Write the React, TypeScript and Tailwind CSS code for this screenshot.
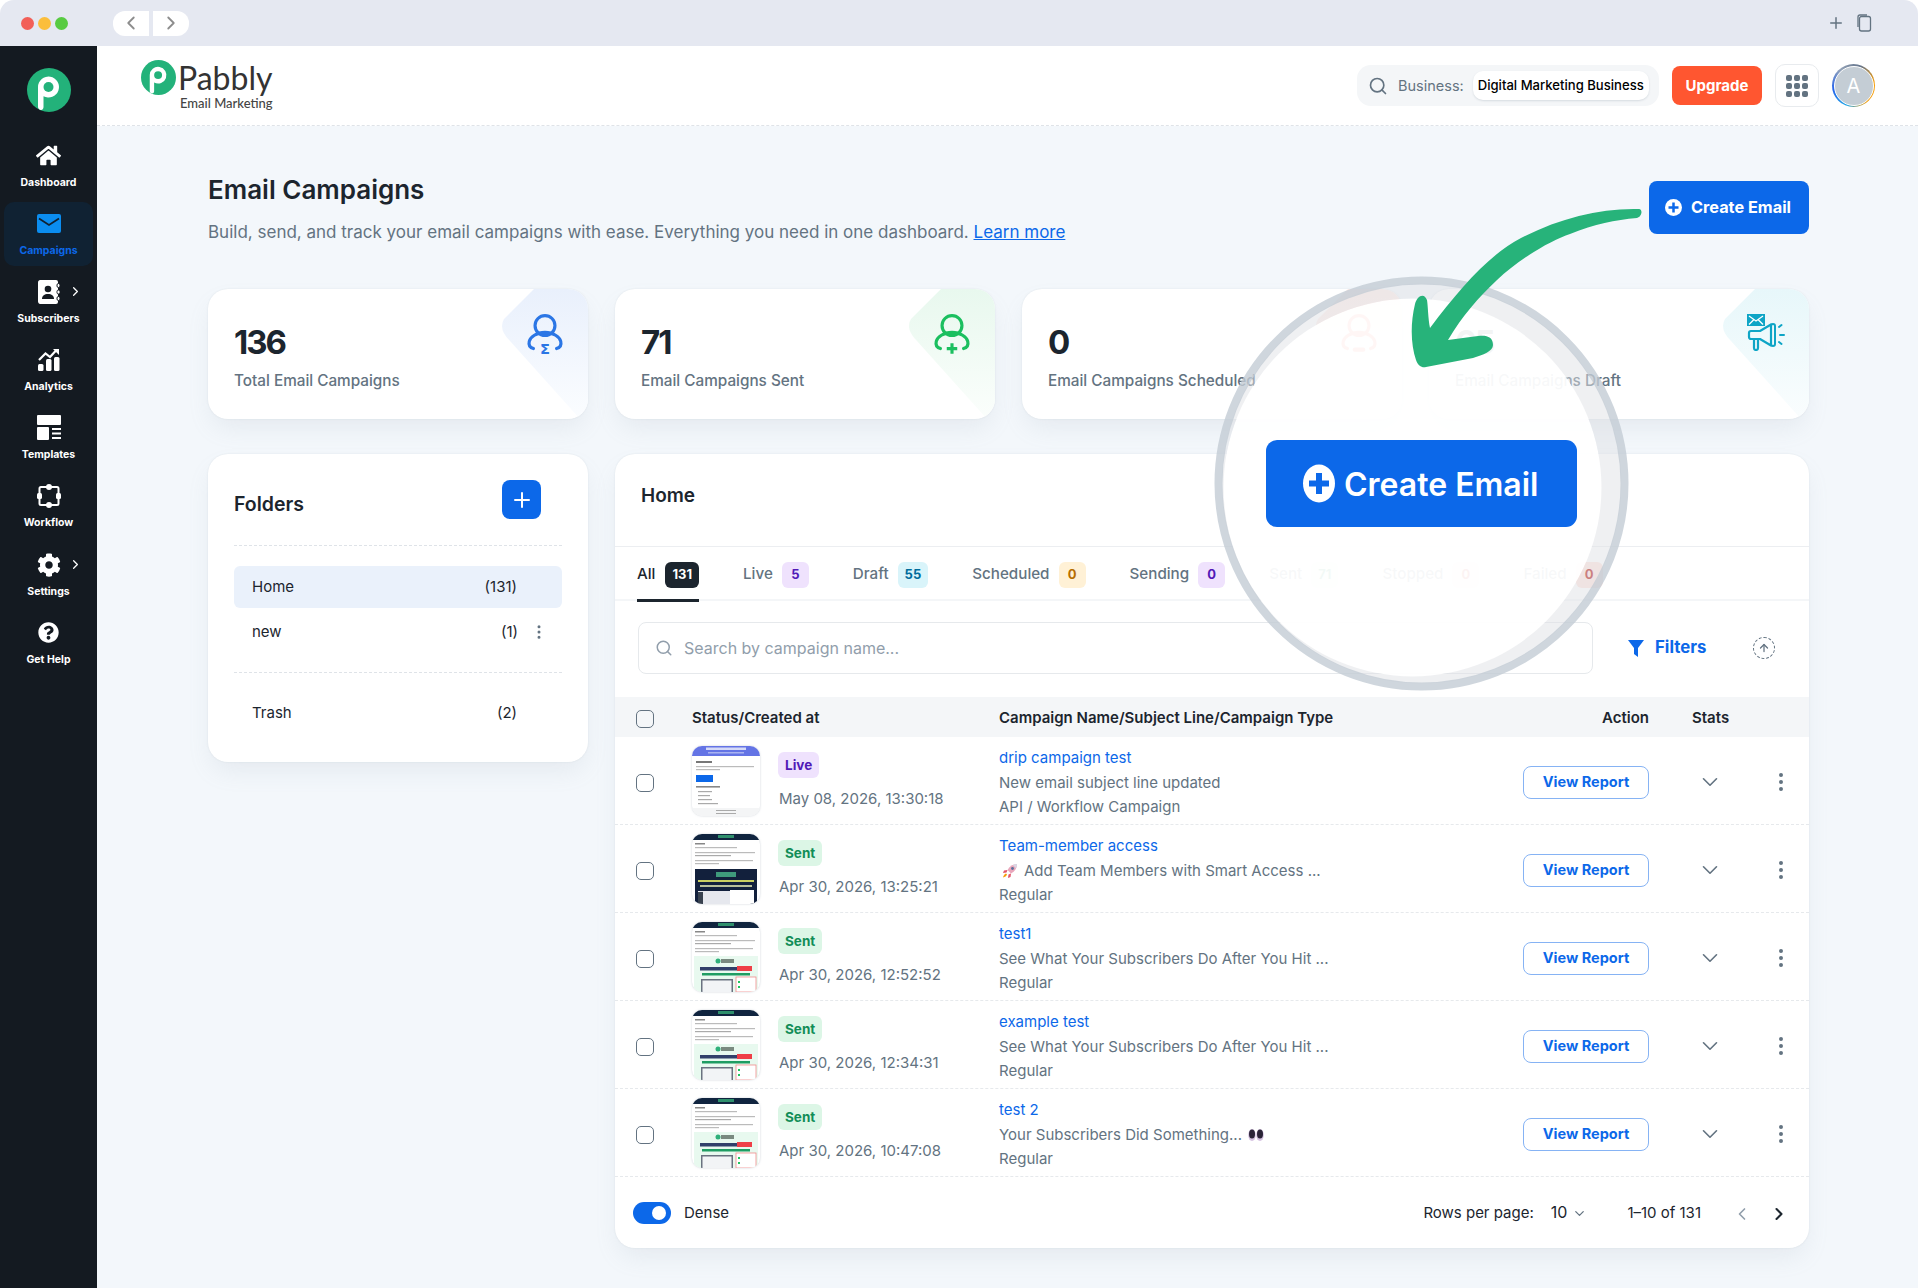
import React from 'react';
import { ChevronDown, ChevronLeft, ChevronRight, EllipsisVertical, Plus, Search, ArrowUp } from 'lucide-react';
import { FaHome, FaCog, FaQuestionCircle } from 'react-icons/fa';

const LogoMark = ({ size }: { size: number }) => (
  <svg width={size} height={size} viewBox="0 0 44 44">
    <circle cx="22" cy="22" r="22" fill="#23b27a" />
    <path d="M11 19a10.5 10.5 0 1 1 5.5 9.3V39c0 1.5-.8 3-2.5 3-1.6 0-3-1.5-3-3z" fill="#fff" />
    <circle cx="21.5" cy="19" r="5" fill="#23b27a" />
  </svg>
);

const MailIcon = () => (
  <svg width="24" height="19" viewBox="0 0 24 19">
    <rect width="24" height="19" rx="2" fill="#0b8df0" />
    <path d="M2 4.5 12 11l10-6.500" fill="none" stroke="#102233" strokeWidth="1.8" />
  </svg>
);

const ContactsIcon = () => (
  <svg width="22" height="24" viewBox="0 0 22 24">
    <path d="M3 0h15a2 2 0 0 1 2 2v20a2 2 0 0 1-2 2H3a2.5 2.5 0 0 1-3-2.5V2.5A2.5 2.5 0 0 1 3 0z" fill="#fff" />
    <rect x="19" y="3.5" width="3" height="4" rx="1.5" fill="#fff" stroke="#141a21" />
    <rect x="19" y="10" width="3" height="4" rx="1.5" fill="#fff" stroke="#141a21" />
    <rect x="19" y="16.5" width="3" height="4" rx="1.5" fill="#fff" stroke="#141a21" />
    <circle cx="10" cy="9" r="3.3" fill="#141a21" />
    <path d="M4 19c0-3.500 2.500-5 6-5s6 1.500 6 5z" fill="#141a21" />
  </svg>
);

const AnalyticsIcon = () => (
  <svg width="22" height="23" viewBox="0 0 22 23">
    <rect x="0" y="16" width="5.5" height="7" rx="1.5" fill="#fff" />
    <rect x="8" y="11" width="5.5" height="12" rx="1.5" fill="#fff" />
    <rect x="16" y="9" width="5.5" height="14" rx="1.5" fill="#fff" />
    <path d="M1 12 7.5 5.500l4.500 3.500 6-6.500" fill="none" stroke="#fff" strokeWidth="2.2" />
    <path d="M15 1h6v6z" fill="#fff" />
  </svg>
);

const TemplatesIcon = () => (
  <svg width="24" height="25" viewBox="0 0 24 25">
    <rect width="24" height="10" rx="1" fill="#fff" />
    <rect y="12" width="12" height="13" rx="1" fill="#fff" />
    <rect x="15" y="13" width="9" height="2" fill="#fff" />
    <rect x="15" y="17.5" width="9" height="2" fill="#fff" />
    <rect x="15" y="22" width="9" height="2" fill="#fff" />
  </svg>
);

const WorkflowIcon = () => (
  <svg width="24" height="24" viewBox="0 0 24 24">
    <rect x="2.5" y="3" width="19" height="18" rx="1.5" fill="none" stroke="#fff" strokeWidth="2" />
    <circle cx="12" cy="3" r="3" fill="#fff" />
    <circle cx="12" cy="21" r="3" fill="#fff" />
    <rect x="0" y="9" width="5" height="6" rx="1.5" fill="#fff" />
    <rect x="19" y="9" width="5" height="6" rx="1.5" fill="#fff" />
  </svg>
);

const PersonIcon = ({ color, mark }: { color: string; mark: 'sigma' | 'plus' | 'minus' }) => (
  <svg width="38" height="43" viewBox="0 0 36 41" fill="none">
    <circle cx="18" cy="11" r="9.5" stroke={color} strokeWidth="3" />
    <path d="M7 33c-3-1-5-3-4-7 1-4 7-8.500 15-8.500s14 4.500 15 8.500c1 4-1 6-4 7" stroke={color} strokeWidth="3" strokeLinecap="round" />
    {mark === 'sigma' && <text x="18" y="38" textAnchor="middle" fontSize="14" fontWeight="700" fill={color} fontFamily="'DejaVu Sans', sans-serif">Σ</text>}
    {mark === 'plus' && <path d="M18 28v10M13 33h10" stroke={color} strokeWidth="3" />}
    {mark === 'minus' && <path d="M14 34h8" stroke={color} strokeWidth="4" strokeLinecap="round" />}
  </svg>
);

const MegaphoneIcon = () => (
  <svg width="38" height="37" viewBox="0 0 38 37" fill="none">
    <rect width="18" height="12" fill="#0ea5c6" />
    <path d="M2 2l7 5 7-5M2 10.500l5-5M16 10.500l-5-5" stroke="#fff" strokeWidth="1.3" />
    <path d="M4 17h9l11-6.500v21L13 25H4a2 2 0 0 1-2-2v-4a2 2 0 0 1 2-2z" stroke="#0ea5c6" strokeWidth="2.2" strokeLinejoin="round" />
    <rect x="24" y="10" width="4" height="22" rx="2" stroke="#0ea5c6" strokeWidth="2" />
    <path d="M7 25v9a2 2 0 0 0 4 0v-9" stroke="#0ea5c6" strokeWidth="2.2" />
    <path d="M32 13l2.500-2M33 21h4M32 28l2.500 2" stroke="#0ea5c6" strokeWidth="2" strokeLinecap="round" />
  </svg>
);

const CornerShape = ({ from, to }: { from: string; to: string }) => {
  const id = 'corner' + from.slice(1);
  return (
    <svg className="absolute top-0 right-0" width="90" height="130" viewBox="0 0 90 130">
      <defs>
        <linearGradient id={id} x1="0.6" y1="0" x2="0.6" y2="1">
          <stop offset="0" stopColor={from} />
          <stop offset="1" stopColor={to} />
        </linearGradient>
      </defs>
      <path d="M36 0H90V130H82L12 52Q0 40 6 30z" fill={`url(#${id})`} />
    </svg>
  );
};

const Thumb = ({ kind }: { kind: 'news' | 'team' | 'activity' }) => (
  <div className="h-[70px] w-[68px] overflow-hidden rounded-[10px] bg-white shadow-[0_0_2px_rgba(145,158,171,0.5)]">
    <svg width="68" height="70" viewBox="0 0 68 70">
      {kind === 'news' && (
        <g>
          <rect width="68" height="10" fill="#6474e5" />
          <rect x="14" y="1.5" width="40" height="2.5" fill="#d5daf8" />
          <rect x="16" y="6" width="36" height="1.5" fill="#a9b3f1" />
          <rect x="4" y="15" width="16" height="2" fill="#777" />
          <rect x="4" y="20" width="58" height="1.2" fill="#bbb" />
          <rect x="4" y="23" width="24" height="1.2" fill="#bbb" />
          <rect x="4" y="29" width="17" height="7" fill="#0c68e9" />
          <rect x="4" y="40" width="24" height="1.6" fill="#888" />
          <rect x="6" y="45" width="14" height="1.2" fill="#aaa" />
          <rect x="6" y="49" width="12" height="1.2" fill="#aaa" />
          <rect x="6" y="53" width="14" height="1.2" fill="#aaa" />
          <rect x="6" y="57" width="20" height="1.2" fill="#aaa" />
          <rect y="62" width="68" height="8" fill="#f4f5f6" />
          <rect x="24" y="64" width="20" height="1" fill="#aaa" />
          <rect x="24" y="67" width="20" height="1" fill="#aaa" />
        </g>
      )}
      {kind !== 'news' && (
        <g>
          <rect width="68" height="6" fill="#10243f" />
          <rect x="26" y="1" width="16" height="3" fill="#2e8f6c" />
          <rect x="3" y="9" width="10" height="1.5" fill="#888" />
          <rect x="3" y="13" width="42" height="1.2" fill="#bbb" />
          <rect x="3" y="18" width="60" height="1.2" fill="#bbb" />
          <rect x="3" y="21" width="36" height="1.2" fill="#aaa" />
          <rect x="3" y="26" width="58" height="1.2" fill="#bbb" />
          <rect x="3" y="29" width="24" height="1.2" fill="#bbb" />
        </g>
      )}
      {kind === 'team' && (
        <g>
          <rect x="3" y="35" width="62" height="35" fill="#12203c" />
          <rect x="24" y="38" width="20" height="5" fill="#3f9b7c" />
          <rect x="6" y="46" width="56" height="2" fill="#c9cf62" />
          <rect x="8" y="51" width="52" height="2" fill="#b8bf9a" />
          <rect x="6" y="57" width="36" height="13" fill="#e6e8ee" />
          <rect x="38" y="56" width="24" height="14" fill="#fff" />
          <rect x="6" y="58" width="5" height="12" fill="#39424f" />
        </g>
      )}
      {kind === 'activity' && (
        <g>
          <rect x="2" y="34" width="64" height="36" fill="#e8f9ef" />
          <circle cx="26" cy="39" r="2.5" fill="#2fb07a" />
          <rect x="29" y="37" width="13" height="4" fill="#7a8a80" />
          <rect x="8" y="45" width="37" height="3.5" fill="#31406a" />
          <rect x="45" y="44" width="15" height="5" fill="#ef3f47" />
          <rect x="10" y="51" width="48" height="2.5" fill="#1e9d62" />
          <rect x="9" y="57" width="32" height="13" fill="#6a7280" />
          <rect x="10.5" y="58.5" width="29" height="11.5" fill="#f2f4f6" />
          <rect x="44" y="55" width="20" height="15" fill="#fff" stroke="#ef8c8c" strokeWidth="0.8" />
          <rect x="46" y="59" width="2" height="2" fill="#22c55e" />
          <rect x="46" y="64" width="2" height="2" fill="#22c55e" />
        </g>
      )}
    </svg>
  </div>
);

const Rocket = () => (
  <svg width="16" height="16" viewBox="0 0 16 16" className="mr-[6px] ml-[3px] shrink-0">
    <path d="M15 1c-4 0-7.500 2-9.500 6L9 10.500C13 8.500 15 5 15 1z" fill="#e9a7bb" />
    <path d="M15 1c-1.500 0-3 .3-4.200 1l3.200 3.200c.7-1.200 1-2.700 1-4.200z" fill="#d9d9e6" />
    <path d="M5.500 7 2 7.500 1 10l3.500-.5zM9 10.500 8.500 14 6 15l.5-3.500z" fill="#e2536a" />
    <path d="M4 10.500c-1.500.5-2.500 2-3 4 2-.5 3.500-1.500 4-3z" fill="#f59e0b" />
    <circle cx="10.500" cy="5.500" r="1.4" fill="#59719c" />
  </svg>
);

const Eyes = () => (
  <svg width="16" height="12" viewBox="0 0 16 12" className="ml-[6px] shrink-0">
    <ellipse cx="4" cy="6" rx="3.8" ry="6" fill="#d6c3e2" />
    <ellipse cx="12" cy="6" rx="3.8" ry="6" fill="#d6c3e2" />
    <ellipse cx="4" cy="5" rx="3" ry="4.5" fill="#2b2438" />
    <ellipse cx="12" cy="5" rx="3" ry="4.5" fill="#2b2438" />
  </svg>
);

const navItems = [
  { label: 'Dashboard', icon: <FaHome className="text-white" size={25} /> },
  { label: 'Campaigns', icon: <MailIcon />, active: true },
  { label: 'Subscribers', icon: <ContactsIcon />, arrow: true },
  { label: 'Analytics', icon: <AnalyticsIcon /> },
  { label: 'Templates', icon: <TemplatesIcon /> },
  { label: 'Workflow', icon: <WorkflowIcon /> },
  { label: 'Settings', icon: <FaCog className="text-white" size={24} />, arrow: true },
  { label: 'Get Help', icon: <FaQuestionCircle className="text-white" size={21} /> },
];

const Sidebar = () => (
  <aside className="flex w-[97px] shrink-0 flex-col bg-[#141a21] px-[4px]">
    <div className="flex h-[88px] items-center justify-center">
      <LogoMark size={44} />
    </div>
    <div className="flex flex-col gap-[4px]">
      {navItems.map(item => (
        <div key={item.label} className={`relative flex h-[64px] flex-col items-center rounded-[10px] pt-[8px] ${item.active ? 'bg-[#102233]' : ''} ${item.label === 'Settings' ? 'mt-[1px]' : ''}`}>
          <div className="flex h-[27px] items-center justify-center">{item.icon}</div>
          <span className={`mt-[7px] text-[10.5px] leading-[14px] font-bold ${item.active ? 'text-[#0c68e9]' : 'text-white'}`}>{item.label}</span>
          {item.arrow && <ChevronRight size={15} className="absolute top-[14px] right-[10px] text-white" />}
        </div>
      ))}
    </div>
  </aside>
);

const Header = () => (
  <header className="flex h-[80px] items-center border-b border-dashed border-[#dfe3e8] bg-white pr-[43px] pl-[44px]">
    <div className="flex h-[52px] items-start">
      <LogoMark size={35} />
      <div className="ml-[2px] flex flex-col">
        <span className="font-['Lato'] text-[32px] leading-[36px] font-normal text-[#333]">Pabbly</span>
        <span className="mt-[-1px] ml-[2px] font-['Lato'] text-[13px] leading-[16px] font-medium text-[#444]">Email Marketing</span>
      </div>
    </div>
    <div className="ml-auto flex items-center">
      <div className="flex h-[41px] w-[302px] items-center rounded-[14px] bg-[#f4f6f8] pl-[11px]">
        <Search size={20} className="text-[#637381]" />
        <span className="ml-[10px] text-[14.5px] text-[#637381]">Business:</span>
        <span className="ml-[9px] flex h-[29px] w-[176px] items-center justify-center rounded-[10px] bg-white text-[13.1px] font-medium text-black shadow-[0_1px_2px_rgba(145,158,171,0.3)]">Digital Marketing Business</span>
      </div>
      <button className="ml-[13px] h-[39px] w-[90px] rounded-[8px] bg-[#ff5630] pt-[1px] text-[15px] font-bold text-white">Upgrade</button>
      <button className="ml-[13px] flex h-[43px] w-[44px] items-center justify-center rounded-[10px] border border-[#e8ebee] bg-white">
        <span className="grid grid-cols-3 gap-[2px]">
          {[0, 1, 2, 3, 4, 5, 6, 7, 8].map(n => <span key={n} className="h-[6px] w-[6px] rounded-[2px] bg-[#637381]" />)}
        </span>
      </button>
      <div className="ml-[13px] h-[43px] w-[43px] rounded-full bg-[conic-gradient(from_200deg,#22a6e8,#2563eb,#94a3b8,#64748b,#f59e0b,#f59e0b,#22a6e8)] p-[1.5px]">
        <div className="flex h-full w-full items-center justify-center rounded-full border border-white bg-[#c4cdd5] text-[20px] text-white">A</div>
      </div>
    </div>
  </header>
);

const stats = [
  { value: '136', label: 'Total Email Campaigns', from: '#e9f0fc', to: '#fbfdff', icon: <PersonIcon color="#2b76e5" mark="sigma" /> },
  { value: '71', label: 'Email Campaigns Sent', from: '#e8f8ee', to: '#fbfefc', icon: <PersonIcon color="#1bbf5f" mark="plus" /> },
  { value: '0', label: 'Email Campaigns Scheduled', from: '#fdece8', to: '#fffbfa', icon: <PersonIcon color="#f0563c" mark="minus" /> },
  { value: '65', label: 'Email Campaigns Draft', from: '#e7f7fa', to: '#fafdfe', icon: <MegaphoneIcon /> },
];

const StatCard = ({ value, label, from, to, icon }: (typeof stats)[number]) => (
  <div className="relative h-[130px] overflow-hidden rounded-[20px] bg-white pt-[33px] pl-[26px] shadow-[0_12px_24px_-4px_rgba(145,158,171,0.14),0_0_2px_rgba(145,158,171,0.2)]">
    <CornerShape from={from} to={to} />
    <div className="absolute top-[25px] right-[24px]">{icon}</div>
    <div className="relative text-[33px] leading-[40px] font-bold tracking-[-0.06em] text-[#1c252e]">{value}</div>
    <div className="relative mt-[9px] text-[15.3px] leading-[20px] font-medium text-[#637381]">{label}</div>
  </div>
);

const Folders = () => (
  <div className="h-[308px] rounded-[20px] bg-white px-[26px] shadow-[0_12px_24px_-4px_rgba(145,158,171,0.14),0_0_2px_rgba(145,158,171,0.2)]">
    <div className="flex h-[92px] items-start justify-between border-b border-dashed border-[#dfe3e8] pt-[26px] pr-[21px]">
      <span className="pt-[10px] text-[19.5px] leading-[28px] font-semibold text-[#1c252e]">Folders</span>
      <button className="flex h-[39px] w-[39px] items-center justify-center rounded-[8px] bg-[#0c68e9] text-white"><Plus size={24} /></button>
    </div>
    <div className="mt-[20px] flex h-[42px] items-center justify-between rounded-[6px] bg-[#eaf1fb] pr-[45px] pl-[18px] text-[15px] text-[#1c252e]">
      <span>Home</span><span>(131)</span>
    </div>
    <div className="flex h-[48px] items-center text-[15px] text-[#1c252e]">
      <span className="ml-[18px]">new</span>
      <span className="mr-[12px] ml-auto">(1)</span>
      <EllipsisVertical size={18} className="mr-[14px] text-[#637381]" />
    </div>
    <div className="mt-[16px] border-t border-dashed border-[#dfe3e8]" />
    <div className="mt-[19px] flex h-[42px] items-center justify-between pr-[45px] pl-[18px] text-[15px] text-[#1c252e]">
      <span>Trash</span><span>(2)</span>
    </div>
  </div>
);

const tabs = [
  { label: 'All', count: '131', badge: 'ml-[10px] bg-[#1c252e] text-white', active: true },
  { label: 'Live', count: '5', badge: 'ml-[9px] bg-[#efe2fd] text-[#5119b7]' },
  { label: 'Draft', count: '55', badge: 'ml-[9px] bg-[#d9f4fa] text-[#006c9c]' },
  { label: 'Scheduled', count: '0', badge: 'ml-[9px] bg-[#fff1d6] text-[#b76e00]' },
  { label: 'Sending', count: '0', badge: 'ml-[9px] bg-[#efe2fd] text-[#5119b7]' },
  { label: 'Sent', count: '71', badge: 'ml-[9px] bg-[#dcf6e6] text-[#118d57]' },
  { label: 'Stopped', count: '0', badge: 'ml-[9px] bg-[#ffe4de] text-[#b71d18]' },
  { label: 'Failed', count: '0', badge: 'ml-[9px] bg-[#ffe4de] text-[#b71d18]' },
];

const rows: { status: string; date: string; name: string; subject: React.ReactNode; type: string; thumb: 'news' | 'team' | 'activity' }[] = [
  { status: 'Live', date: 'May 08, 2026, 13:30:18', name: 'drip campaign test', subject: 'New email subject line updated', type: 'API / Workflow Campaign', thumb: 'news' },
  { status: 'Sent', date: 'Apr 30, 2026, 13:25:21', name: 'Team-member access', subject: <><Rocket />Add Team Members with Smart Access ...</>, type: 'Regular', thumb: 'team' },
  { status: 'Sent', date: 'Apr 30, 2026, 12:52:52', name: 'test1', subject: 'See What Your Subscribers Do After You Hit ...', type: 'Regular', thumb: 'activity' },
  { status: 'Sent', date: 'Apr 30, 2026, 12:34:31', name: 'example test', subject: 'See What Your Subscribers Do After You Hit ...', type: 'Regular', thumb: 'activity' },
  { status: 'Sent', date: 'Apr 30, 2026, 10:47:08', name: 'test 2', subject: <>Your Subscribers Did Something...<Eyes /></>, type: 'Regular', thumb: 'activity' },
];

const Checkbox = () => <span className="block h-[18px] w-[18px] rounded-[5px] border-[1.5px] border-[#637381]" />;

const CampaignTable = () => (
  <div className="h-[794px] overflow-hidden rounded-[20px] bg-white shadow-[0_12px_24px_-4px_rgba(145,158,171,0.14),0_0_2px_rgba(145,158,171,0.2)]">
    <div className="h-[93px] border-b border-[#eceef1] pt-[29px] pl-[26px] text-[19px] leading-[26px] font-semibold text-[#1c252e]">Home</div>
    <div className="flex h-[54px] gap-[44px] border-b-2 border-[#f4f6f8] pl-[22px]">
      {tabs.map(tab => (
        <div key={tab.label} className={`-mb-[2px] flex h-[55px] items-center border-b-[3px] pt-[3px] text-[15.2px] font-medium ${tab.active ? 'border-[#1c252e] text-[#1c252e]' : 'border-transparent text-[#637381]'}`}>
          <span>{tab.label}</span>
          <span className={`flex h-[26px] min-w-[27px] items-center justify-center rounded-[6px] px-[7px] text-[13px] font-bold ${tab.badge}`}>{tab.count}</span>
        </div>
      ))}
    </div>
    <div className="mt-[21px] flex items-center pl-[23px]">
      <div className="flex h-[52px] w-[955px] items-center rounded-[8px] border border-[#e6e9ec] pl-[16px]">
        <Search size={18} className="text-[#919eab]" />
        <span className="ml-[11px] text-[16px] text-[#919eab]">Search by campaign name...</span>
      </div>
      <div className="ml-[35px] flex items-center text-[16.8px] font-bold text-[#0c68e9]">
        <svg width="16" height="18" viewBox="0 0 16 18" className="mr-[11px]"><path d="M0 1h16L10 9v9l-4-3V9z" fill="#0c68e9" /></svg>
        Filters
      </div>
      <div className="ml-[47px] flex h-[22px] w-[22px] items-center justify-center rounded-full border-[1.5px] border-dashed border-[#637381] text-[#637381]">
        <ArrowUp size={12} strokeWidth={2.5} />
      </div>
    </div>
    <div className="mt-[23px] grid h-[40px] grid-cols-[77px_307px_1fr_126px_122px_38px] items-center bg-[#f4f6f8] pt-[2px] text-[15px] font-semibold text-[#1c252e]">
      <div className="pt-[2px] pl-[21px]"><Checkbox /></div>
      <div>Status/Created at</div>
      <div>Campaign Name/Subject Line/Campaign Type</div>
      <div className="text-right">Action</div>
      <div className="pl-[43px]">Stats</div>
      <div />
    </div>
    {rows.map(row => (
      <div key={row.date} className="grid h-[88px] grid-cols-[77px_86px_221px_1fr_126px_122px_20px_18px] items-center border-b border-dashed border-[#e6e9ec]">
        <div className="pt-[5px] pl-[21px]"><Checkbox /></div>
        <Thumb kind={row.thumb} />
        <div className="flex h-full flex-col items-start pt-[15px]">
          <span className={`flex h-[26px] items-center rounded-[6px] px-[7px] text-[13.5px] font-bold ${row.status === 'Live' ? 'bg-[#efe2fd] text-[#5119b7]' : 'bg-[#dcf6e6] text-[#118d57]'}`}>{row.status}</span>
          <span className="mt-[11px] ml-[1px] text-[15px] leading-[20px] text-[#637381]">{row.date}</span>
        </div>
        <div className="flex h-full flex-col pt-[9px] text-[15px] leading-[24.5px] text-[#637381]">
          <span className="text-[#0c68e9]">{row.name}</span>
          <span className="flex items-center">{row.subject}</span>
          <span>{row.type}</span>
        </div>
        <button className="mt-[3px] h-[33px] rounded-[8px] border border-[#86b3f4] text-[14.5px] font-bold text-[#0c68e9]">View Report</button>
        <div className="mt-[3px] flex justify-center"><ChevronDown size={26} strokeWidth={1.5} className="text-[#637381]" /></div>
        <div className="mt-[3px] flex justify-center"><EllipsisVertical size={24} className="shrink-0 text-[#637381]" /></div>
        <div />
      </div>
    ))}
    <div className="flex h-[70px] items-center pt-[2px] pl-[18px] text-[15px] text-[#1c252e]">
      <span className="relative block h-[22px] w-[38px] shrink-0 rounded-full bg-[#0c68e9]">
        <span className="absolute top-[4px] right-[5px] h-[14px] w-[14px] rounded-full bg-white" />
      </span>
      <span className="ml-[13px]">Dense</span>
      <div className="ml-auto flex items-center pt-[1px] pr-[20px] whitespace-nowrap">
        <span>Rows per page:</span>
        <span className="-mt-[3px] ml-[17px] text-[16px]">10</span>
        <ChevronDown size={15} className="ml-[5px] text-[#637381]" />
        <span className="ml-[40px]">1–10 of 131</span>
        <ChevronLeft size={20} className="ml-[31px] text-[#919eab]" />
        <ChevronRight size={20} strokeWidth={2.5} className="ml-[17px] text-[#1c252e]" />
      </div>
    </div>
  </div>
);

// magnifier and the hand-drawn arrow sit on top of the page
const Magnifier = () => (
  <>
    <svg className="absolute top-0 left-0" width="1918" height="1288" viewBox="0 0 1918 1288" fill="none">
      <circle cx="1412.5" cy="487.5" r="189" fill="#fff" fillOpacity="0.95" />
      <path fillRule="evenodd" d="M1221.500 483.500a200 200 0 1 0 400 0a200 200 0 1 0-400 0zM1223.500 487.500a189 189 0 1 1 378 0a189 189 0 1 1-378 0z" fill="#dfe1e5" fillOpacity="0.5" />
      <circle cx="1421.5" cy="483.5" r="203" stroke="#c3ccd4" strokeWidth="8" strokeOpacity="0.8" />
      <path d="M1639 209C1600 208 1560 218 1521 238 1490 254 1460 288 1430 328 1428 318 1428 306 1427 300 1424 292 1417 296 1415 304 1410 325 1411 345 1416 360 1418 366 1422 368 1426 367L1473 358C1483 355 1493 351 1493 345 1493 337 1487 335 1478 336L1448 340C1463 315 1478 298 1497 280 1520 258 1552 240 1570 234 1595 224 1615 220 1637 218 1642 217 1643 209 1639 209Z" fill="#27b37a" />
    </svg>
    <button className="absolute top-[440px] left-[1266px] flex h-[87px] w-[311px] items-center rounded-[11px] bg-[#0c68e9] pt-[2px] pl-[37px] text-[32px] font-semibold text-white">
      <svg width="32" height="39" viewBox="0 0 32 39" className="mr-[9px] -mt-[2px]">
        <ellipse cx="16" cy="19.5" rx="16" ry="19" fill="#fff" />
        <path d="M16 9v21M6 19.500h20" stroke="#0c68e9" strokeWidth="6" />
      </svg>
      Create Email
    </button>
  </>
);

export default function App() {
  return (
    <div className="relative flex h-[1288px] w-[1918px] flex-col overflow-hidden bg-white font-['Inter',sans-serif]">
      <div className="relative flex h-[46px] shrink-0 items-center rounded-t-[14px] bg-[#e5e8f1] pl-[21px]">
        <span className="h-[13px] w-[13px] rounded-full bg-[#f25f58]" />
        <span className="ml-[4px] h-[13px] w-[13px] rounded-full bg-[#fbbe3c]" />
        <span className="ml-[4px] h-[13px] w-[13px] rounded-full bg-[#58cb42]" />
        <span className="ml-[45px] flex h-[25px] w-[36px] items-center justify-center rounded-l-[12px] bg-white"><ChevronLeft size={22} className="text-[#8d8d8d]" /></span>
        <span className="ml-[4px] flex h-[25px] w-[36px] items-center justify-center rounded-r-[12px] bg-white"><ChevronRight size={22} className="text-[#8d8d8d]" /></span>
        <Plus size={18} className="ml-auto text-[#637381]" />
        <svg width="16" height="18" viewBox="0 0 16 18" fill="none" className="mr-[46px] ml-[11px]">
          <rect x="3.5" y="2.5" width="11" height="14.5" rx="2" stroke="#637381" strokeWidth="1.3" />
          <path d="M2 13V3a2 2 0 0 1 2-2h7" stroke="#637381" strokeWidth="1.3" />
        </svg>
      </div>
      <div className="flex min-h-0 flex-1">
        <Sidebar />
        <div className="flex min-w-0 flex-1 flex-col bg-[#f3f7fb]">
          <Header />
          <main className="pt-[55px] pr-[109px] pl-[111px]">
            <div className="flex h-[53px] items-start justify-between">
              <div>
                <h1 className="mt-[-6px] text-[26px] leading-[30px] font-semibold text-[#1c252e]">Email Campaigns</h1>
                <p className="mt-[15px] text-[17px] leading-[24px] text-[#637381]">
                  Build, send, and track your email campaigns with ease. Everything you need in one dashboard. <span className="text-[#0c68e9] underline">Learn more</span>
                </p>
              </div>
              <button className="flex h-[53px] w-[160px] items-center justify-center rounded-[8px] bg-[#0c68e9] pr-[2px] text-[16.3px] font-bold text-white">
                <svg width="17" height="17" viewBox="0 0 17 17" className="mr-[9px]">
                  <circle cx="8.5" cy="8.5" r="8.5" fill="#fff" />
                  <path d="M8.500 3.500v10M3.500 8.500h10" stroke="#0c68e9" strokeWidth="2.5" />
                </svg>
                Create Email
              </button>
            </div>
            <div className="mt-[55px] grid grid-cols-4 gap-[27px]">
              {stats.map(s => <StatCard key={s.label} {...s} />)}
            </div>
            <div className="mt-[35px] flex items-start gap-[27px]">
              <div className="w-[380px] shrink-0"><Folders /></div>
              <div className="min-w-0 flex-1"><CampaignTable /></div>
            </div>
          </main>
        </div>
      </div>
      <Magnifier />
    </div>
  );
}
